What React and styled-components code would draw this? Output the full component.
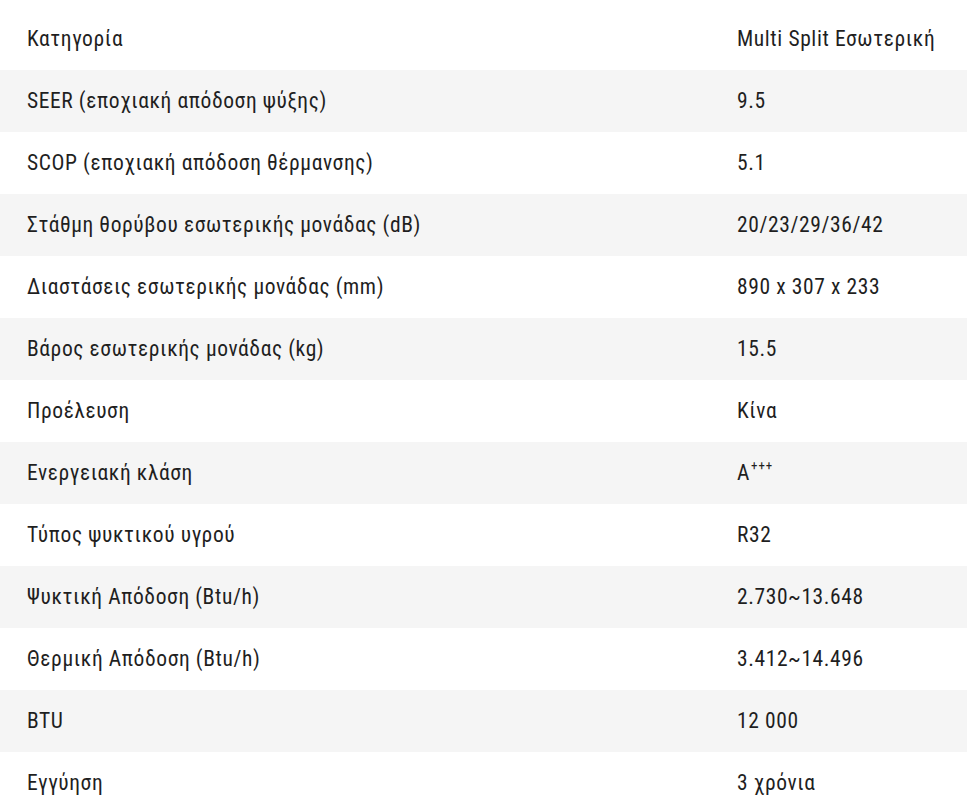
import React from 'react';
import styled, { createGlobalStyle } from 'styled-components';

const GlobalStyle = createGlobalStyle`
  html, body {
    margin: 0;
    padding: 0;
    background: #ffffff;
  }
  body {
    padding-top: 8px;
    font-family: Roboto, "Noto Sans", sans-serif;
    color: #1f1f1f;
  }
`;

const Table = styled.div`
  display: flex;
  flex-direction: column;
  width: 100%;
`;

const Row = styled.div`
  display: grid;
  grid-template-columns: 710px 1fr;
  align-items: center;
  height: 62px;
  padding: 0 27px;
  background: ${props => (props.$shaded ? '#f5f5f5' : '#ffffff')};
`;

const Cell = styled.div`
  font-size: 21.5px;
  font-stretch: condensed;
  letter-spacing: 0.6px;
  line-height: 1.2;
  white-space: nowrap;
`;

const Sup = styled.sup`
  font-size: 0.6em;
  vertical-align: 0.75em;
  line-height: 0;
  letter-spacing: 1px;
  margin-left: 1px;
`;

const specs = [
  { label: 'Κατηγορία', value: 'Multi Split Εσωτερική' },
  { label: 'SEER (εποχιακή απόδοση ψύξης)', value: '9.5' },
  { label: 'SCOP (εποχιακή απόδοση θέρμανσης)', value: '5.1' },
  { label: 'Στάθμη θορύβου εσωτερικής μονάδας (dB)', value: '20/23/29/36/42' },
  { label: 'Διαστάσεις εσωτερικής μονάδας (mm)', value: '890 x 307 x 233' },
  { label: 'Βάρος εσωτερικής μονάδας (kg)', value: '15.5' },
  { label: 'Προέλευση', value: 'Κίνα' },
  { label: 'Ενεργειακή κλάση', value: <>A<Sup>+++</Sup></> },
  { label: 'Τύπος ψυκτικού υγρού', value: 'R32' },
  { label: 'Ψυκτική Απόδοση (Btu/h)', value: '2.730~13.648' },
  { label: 'Θερμική Απόδοση (Btu/h)', value: '3.412~14.496' },
  { label: 'BTU', value: '12 000' },
  { label: 'Εγγύηση', value: '3 χρόνια' }
];

const App = () => (
  <>
    <GlobalStyle />
    <Table>
      {specs.map((spec, i) => (
        <Row key={i} $shaded={i % 2 === 1}>
          <Cell>{spec.label}</Cell>
          <Cell>{spec.value}</Cell>
        </Row>
      ))}
    </Table>
  </>
);

export default App;
